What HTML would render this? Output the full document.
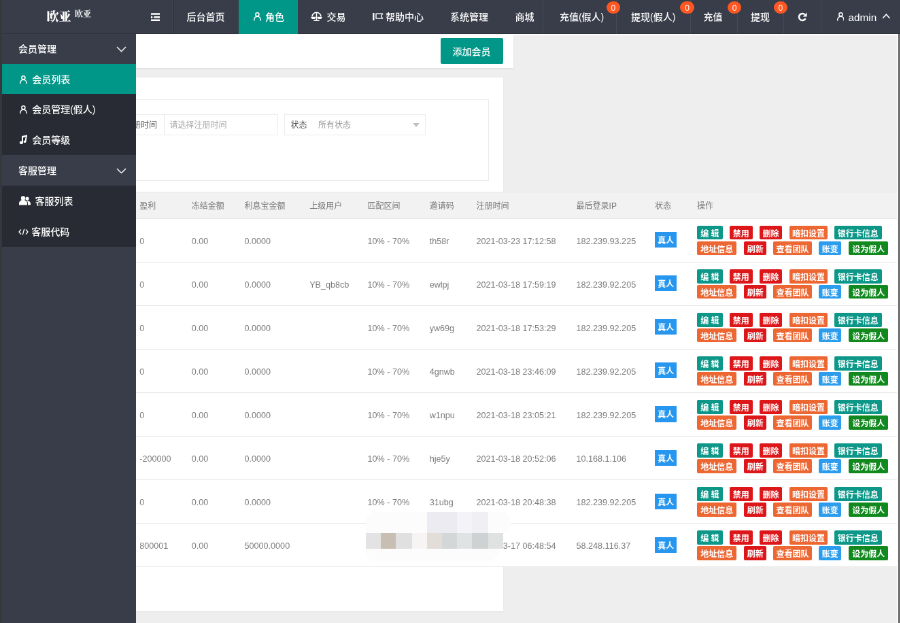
<!DOCTYPE html><html lang="zh-CN"><head><meta charset="utf-8"><title>会员列表</title><style>
*{box-sizing:border-box}
html,body{margin:0;padding:0}
body{width:900px;height:623px;overflow:hidden;background:#eeeeee;font-family:"Liberation Sans","Noto Sans CJK SC",sans-serif;}
#w{will-change:transform;position:absolute;left:0;top:0;width:1324px;height:918px;transform:scale(.68);transform-origin:0 0;overflow:hidden;background:#eeeeee;font-size:14px;color:#666}
#in{position:absolute;left:0;top:-1px;width:1324px;height:920px}
.abs{position:absolute}
#hd{position:absolute;left:0;top:0;width:1324px;height:51.3px;background:#393d49;z-index:30;border-bottom:1px solid #30333d}
.ni{font-weight:500;position:absolute;top:0;height:51.3px;line-height:52.2px;color:#fff;font-size:14px;white-space:nowrap}
.ni.r{border-left:1px solid rgba(255,255,255,.07)}
.bdg{position:absolute;top:3.3px;right:-6px;height:17.5px;width:20.5px;line-height:21px;overflow:hidden;padding:0;border-radius:9px;background:#ff5722;color:#fff;font-size:12px;text-align:center;z-index:2}
#sd{position:absolute;left:0;top:0;padding-top:0;width:200.2px;height:920px;background:#393d49;z-index:20}
.si{font-weight:500;position:absolute;left:0;width:200.2px;height:45px;line-height:47.4px;color:#fff;font-size:14px;white-space:nowrap}
.si.sub{background:#282b33}
.si.act{background:#009688;left:3px;width:197.2px}
.si .t{position:absolute;left:47.2px;top:0}
.si .g{position:absolute;left:27px;top:0}
.si svg{position:absolute}
#strip{position:absolute;left:0;top:0;width:2.8px;height:920px;background:#37383e;z-index:40}
#tb{position:absolute;left:0;top:50px;width:755px;height:50.5px;background:#fff;box-shadow:0 1px 2px rgba(0,0,0,.08)}
#add{font-weight:500;position:absolute;left:647.5px;top:57px;width:92px;height:38px;line-height:40.8px;background:#009688;color:#fff;border-radius:2px;text-align:center;font-size:14px}
#card{position:absolute;left:0;top:115px;width:739.5px;height:785px;background:#fff;box-shadow:0 1px 2px rgba(0,0,0,.06)}
#fs{position:absolute;left:0;top:147px;width:718.6px;height:119.8px;border:1px solid #ebebeb;border-left:none}
.fg{position:absolute;top:168.6px;height:31.5px;border:1px solid #ececec;background:#fff;font-size:12px;line-height:31px;color:#555;white-space:nowrap}
.ph{color:#aaa}
#th{position:absolute;left:0;top:282.5px;width:1324px;height:40.2px;background:#f2f2f2;border-top:1px solid #e6e6e6;border-bottom:1px solid #e6e6e6;font-size:12px;color:#777}
#th span{position:absolute;top:0;line-height:40.6px;white-space:nowrap}
.tr{position:absolute;left:0;width:1324px;height:64.06px;background:#fff;border-bottom:1px solid #e6e6e6;font-size:12.6px;color:#7a7a7a}
.tr span.c{position:absolute;top:0;line-height:67.6px;white-space:nowrap}
.b{font-weight:700;position:absolute;height:20.7px;line-height:24.4px;overflow:hidden;font-size:12px;color:#fff;border-radius:2px;text-align:center;white-space:nowrap;padding:0}
.teal{background:#0c9788}.red{background:#dd161a}.org{background:#ed6733}.blue{background:#2c9cec}.grn{background:#11891e}
#edge{position:absolute;left:1321.2px;top:50px;width:3px;height:870px;background:linear-gradient(90deg,#4c4c4c,#8c8c8c);z-index:25}
#edgew{position:absolute;left:1318.8px;top:50px;width:2.4px;height:870px;background:#fbfbfb;z-index:25}
#topl{position:absolute;left:200px;top:51.3px;width:1121px;height:1.8px;background:#fbfbfb;z-index:4}
</style></head><body><div id="w"><div id="in">
<div id="tb"></div><div id="add">添加会员</div>
<div id="card"></div><div id="fs"></div>
<div class="fg" style="left:120px;width:288.5px"><span class="abs" style="right:55px;top:0;display:none"></span><span class="abs" style="left:62px;top:0">注册时间</span><span class="abs" style="left:120px;top:0;width:1px;height:30px;background:#e6e6e6"></span><span class="abs ph" style="left:128.4px;top:0">请选择注册时间</span></div>
<div class="fg" style="left:418.2px;width:207.5px"><span class="abs" style="left:8.3px;top:0">状态</span><span class="abs ph" style="left:48.8px;top:0;color:#999">所有状态</span><span class="abs" style="left:187.5px;top:12.5px;width:0;height:0;border-left:5.5px solid transparent;border-right:5.5px solid transparent;border-top:6px solid #c2c2c2"></span></div>
<div id="th">
<span style="left:205.2px">盈利</span>
<span style="left:281.7px">冻结金额</span>
<span style="left:359.6px">利息宝金额</span>
<span style="left:455.2px">上级用户</span>
<span style="left:540.5px">匹配区间</span>
<span style="left:631.7px">邀请码</span>
<span style="left:700.6px">注册时间</span>
<span style="left:847.6px">最后登录IP</span>
<span style="left:963px">状态</span>
<span style="left:1025px">操作</span>
</div>
<div class="tr" style="top:322.7px">
<span class="c" style="left:205.2px">0</span>
<span class="c" style="left:281.7px">0.00</span>
<span class="c" style="left:359.6px">0.0000</span>
<span class="c" style="left:540.5px">10% - 70%</span>
<span class="c" style="left:631.7px">th58r</span>
<span class="c" style="left:700.6px">2021-03-23 17:12:58</span>
<span class="c" style="left:847.6px">182.239.93.225</span>
<span class="b blue" style="left:963.2px;top:19.5px;width:32.2px;height:23.1px;line-height:27.2px;border-radius:0;background:#2696ef">真人</span>
<span class="b teal" style="left:1025.0px;top:10.1px;width:37.8px">编 辑</span>
<span class="b red" style="left:1073.1px;top:10.1px;width:33.5px">禁用</span>
<span class="b red" style="left:1116.9px;top:10.1px;width:33.4px">删除</span>
<span class="b org" style="left:1160.6px;top:10.1px;width:56.6px">暗扣设置</span>
<span class="b teal" style="left:1226.8px;top:10.1px;width:70.0px">银行卡信息</span>
<span class="b org" style="left:1025.0px;top:32.9px;width:58.4px">地址信息</span>
<span class="b red" style="left:1094.3px;top:32.9px;width:32.9px">刷新</span>
<span class="b org" style="left:1137.2px;top:32.9px;width:56.6px">查看团队</span>
<span class="b blue" style="left:1204.4px;top:32.9px;width:32.6px">账变</span>
<span class="b grn" style="left:1248.1px;top:32.9px;width:58.2px">设为假人</span>
</div>
<div class="tr" style="top:386.76px">
<span class="c" style="left:205.2px">0</span>
<span class="c" style="left:281.7px">0.00</span>
<span class="c" style="left:359.6px">0.0000</span>
<span class="c" style="left:455.2px">YB_qb8cb</span>
<span class="c" style="left:540.5px">10% - 70%</span>
<span class="c" style="left:631.7px">ewlpj</span>
<span class="c" style="left:700.6px">2021-03-18 17:59:19</span>
<span class="c" style="left:847.6px">182.239.92.205</span>
<span class="b blue" style="left:963.2px;top:19.5px;width:32.2px;height:23.1px;line-height:27.2px;border-radius:0;background:#2696ef">真人</span>
<span class="b teal" style="left:1025.0px;top:10.1px;width:37.8px">编 辑</span>
<span class="b red" style="left:1073.1px;top:10.1px;width:33.5px">禁用</span>
<span class="b red" style="left:1116.9px;top:10.1px;width:33.4px">删除</span>
<span class="b org" style="left:1160.6px;top:10.1px;width:56.6px">暗扣设置</span>
<span class="b teal" style="left:1226.8px;top:10.1px;width:70.0px">银行卡信息</span>
<span class="b org" style="left:1025.0px;top:32.9px;width:58.4px">地址信息</span>
<span class="b red" style="left:1094.3px;top:32.9px;width:32.9px">刷新</span>
<span class="b org" style="left:1137.2px;top:32.9px;width:56.6px">查看团队</span>
<span class="b blue" style="left:1204.4px;top:32.9px;width:32.6px">账变</span>
<span class="b grn" style="left:1248.1px;top:32.9px;width:58.2px">设为假人</span>
</div>
<div class="tr" style="top:450.82px">
<span class="c" style="left:205.2px">0</span>
<span class="c" style="left:281.7px">0.00</span>
<span class="c" style="left:359.6px">0.0000</span>
<span class="c" style="left:540.5px">10% - 70%</span>
<span class="c" style="left:631.7px">yw69g</span>
<span class="c" style="left:700.6px">2021-03-18 17:53:29</span>
<span class="c" style="left:847.6px">182.239.92.205</span>
<span class="b blue" style="left:963.2px;top:19.5px;width:32.2px;height:23.1px;line-height:27.2px;border-radius:0;background:#2696ef">真人</span>
<span class="b teal" style="left:1025.0px;top:10.1px;width:37.8px">编 辑</span>
<span class="b red" style="left:1073.1px;top:10.1px;width:33.5px">禁用</span>
<span class="b red" style="left:1116.9px;top:10.1px;width:33.4px">删除</span>
<span class="b org" style="left:1160.6px;top:10.1px;width:56.6px">暗扣设置</span>
<span class="b teal" style="left:1226.8px;top:10.1px;width:70.0px">银行卡信息</span>
<span class="b org" style="left:1025.0px;top:32.9px;width:58.4px">地址信息</span>
<span class="b red" style="left:1094.3px;top:32.9px;width:32.9px">刷新</span>
<span class="b org" style="left:1137.2px;top:32.9px;width:56.6px">查看团队</span>
<span class="b blue" style="left:1204.4px;top:32.9px;width:32.6px">账变</span>
<span class="b grn" style="left:1248.1px;top:32.9px;width:58.2px">设为假人</span>
</div>
<div class="tr" style="top:514.88px">
<span class="c" style="left:205.2px">0</span>
<span class="c" style="left:281.7px">0.00</span>
<span class="c" style="left:359.6px">0.0000</span>
<span class="c" style="left:540.5px">10% - 70%</span>
<span class="c" style="left:631.7px">4gnwb</span>
<span class="c" style="left:700.6px">2021-03-18 23:46:09</span>
<span class="c" style="left:847.6px">182.239.92.205</span>
<span class="b blue" style="left:963.2px;top:19.5px;width:32.2px;height:23.1px;line-height:27.2px;border-radius:0;background:#2696ef">真人</span>
<span class="b teal" style="left:1025.0px;top:10.1px;width:37.8px">编 辑</span>
<span class="b red" style="left:1073.1px;top:10.1px;width:33.5px">禁用</span>
<span class="b red" style="left:1116.9px;top:10.1px;width:33.4px">删除</span>
<span class="b org" style="left:1160.6px;top:10.1px;width:56.6px">暗扣设置</span>
<span class="b teal" style="left:1226.8px;top:10.1px;width:70.0px">银行卡信息</span>
<span class="b org" style="left:1025.0px;top:32.9px;width:58.4px">地址信息</span>
<span class="b red" style="left:1094.3px;top:32.9px;width:32.9px">刷新</span>
<span class="b org" style="left:1137.2px;top:32.9px;width:56.6px">查看团队</span>
<span class="b blue" style="left:1204.4px;top:32.9px;width:32.6px">账变</span>
<span class="b grn" style="left:1248.1px;top:32.9px;width:58.2px">设为假人</span>
</div>
<div class="tr" style="top:578.94px">
<span class="c" style="left:205.2px">0</span>
<span class="c" style="left:281.7px">0.00</span>
<span class="c" style="left:359.6px">0.0000</span>
<span class="c" style="left:540.5px">10% - 70%</span>
<span class="c" style="left:631.7px">w1npu</span>
<span class="c" style="left:700.6px">2021-03-18 23:05:21</span>
<span class="c" style="left:847.6px">182.239.92.205</span>
<span class="b blue" style="left:963.2px;top:19.5px;width:32.2px;height:23.1px;line-height:27.2px;border-radius:0;background:#2696ef">真人</span>
<span class="b teal" style="left:1025.0px;top:10.1px;width:37.8px">编 辑</span>
<span class="b red" style="left:1073.1px;top:10.1px;width:33.5px">禁用</span>
<span class="b red" style="left:1116.9px;top:10.1px;width:33.4px">删除</span>
<span class="b org" style="left:1160.6px;top:10.1px;width:56.6px">暗扣设置</span>
<span class="b teal" style="left:1226.8px;top:10.1px;width:70.0px">银行卡信息</span>
<span class="b org" style="left:1025.0px;top:32.9px;width:58.4px">地址信息</span>
<span class="b red" style="left:1094.3px;top:32.9px;width:32.9px">刷新</span>
<span class="b org" style="left:1137.2px;top:32.9px;width:56.6px">查看团队</span>
<span class="b blue" style="left:1204.4px;top:32.9px;width:32.6px">账变</span>
<span class="b grn" style="left:1248.1px;top:32.9px;width:58.2px">设为假人</span>
</div>
<div class="tr" style="top:643.0px">
<span class="c" style="left:205.2px">-200000</span>
<span class="c" style="left:281.7px">0.00</span>
<span class="c" style="left:359.6px">0.0000</span>
<span class="c" style="left:540.5px">10% - 70%</span>
<span class="c" style="left:631.7px">hje5y</span>
<span class="c" style="left:700.6px">2021-03-18 20:52:06</span>
<span class="c" style="left:847.6px">10.168.1.106</span>
<span class="b blue" style="left:963.2px;top:19.5px;width:32.2px;height:23.1px;line-height:27.2px;border-radius:0;background:#2696ef">真人</span>
<span class="b teal" style="left:1025.0px;top:10.1px;width:37.8px">编 辑</span>
<span class="b red" style="left:1073.1px;top:10.1px;width:33.5px">禁用</span>
<span class="b red" style="left:1116.9px;top:10.1px;width:33.4px">删除</span>
<span class="b org" style="left:1160.6px;top:10.1px;width:56.6px">暗扣设置</span>
<span class="b teal" style="left:1226.8px;top:10.1px;width:70.0px">银行卡信息</span>
<span class="b org" style="left:1025.0px;top:32.9px;width:58.4px">地址信息</span>
<span class="b red" style="left:1094.3px;top:32.9px;width:32.9px">刷新</span>
<span class="b org" style="left:1137.2px;top:32.9px;width:56.6px">查看团队</span>
<span class="b blue" style="left:1204.4px;top:32.9px;width:32.6px">账变</span>
<span class="b grn" style="left:1248.1px;top:32.9px;width:58.2px">设为假人</span>
</div>
<div class="tr" style="top:707.06px">
<span class="c" style="left:205.2px">0</span>
<span class="c" style="left:281.7px">0.00</span>
<span class="c" style="left:359.6px">0.0000</span>
<span class="c" style="left:540.5px">10% - 70%</span>
<span class="c" style="left:631.7px">31ubg</span>
<span class="c" style="left:700.6px">2021-03-18 20:48:38</span>
<span class="c" style="left:847.6px">182.239.92.205</span>
<span class="b blue" style="left:963.2px;top:19.5px;width:32.2px;height:23.1px;line-height:27.2px;border-radius:0;background:#2696ef">真人</span>
<span class="b teal" style="left:1025.0px;top:10.1px;width:37.8px">编 辑</span>
<span class="b red" style="left:1073.1px;top:10.1px;width:33.5px">禁用</span>
<span class="b red" style="left:1116.9px;top:10.1px;width:33.4px">删除</span>
<span class="b org" style="left:1160.6px;top:10.1px;width:56.6px">暗扣设置</span>
<span class="b teal" style="left:1226.8px;top:10.1px;width:70.0px">银行卡信息</span>
<span class="b org" style="left:1025.0px;top:32.9px;width:58.4px">地址信息</span>
<span class="b red" style="left:1094.3px;top:32.9px;width:32.9px">刷新</span>
<span class="b org" style="left:1137.2px;top:32.9px;width:56.6px">查看团队</span>
<span class="b blue" style="left:1204.4px;top:32.9px;width:32.6px">账变</span>
<span class="b grn" style="left:1248.1px;top:32.9px;width:58.2px">设为假人</span>
</div>
<div class="tr" style="top:771.12px">
<span class="c" style="left:205.2px">800001</span>
<span class="c" style="left:281.7px">0.00</span>
<span class="c" style="left:359.6px">50000.0000</span>
<span class="c" style="left:700.6px">2021-03-17 06:48:54</span>
<span class="c" style="left:847.6px">58.248.116.37</span>
<span class="b blue" style="left:963.2px;top:19.5px;width:32.2px;height:23.1px;line-height:27.2px;border-radius:0;background:#2696ef">真人</span>
<span class="b teal" style="left:1025.0px;top:10.1px;width:37.8px">编 辑</span>
<span class="b red" style="left:1073.1px;top:10.1px;width:33.5px">禁用</span>
<span class="b red" style="left:1116.9px;top:10.1px;width:33.4px">删除</span>
<span class="b org" style="left:1160.6px;top:10.1px;width:56.6px">暗扣设置</span>
<span class="b teal" style="left:1226.8px;top:10.1px;width:70.0px">银行卡信息</span>
<span class="b org" style="left:1025.0px;top:32.9px;width:58.4px">地址信息</span>
<span class="b red" style="left:1094.3px;top:32.9px;width:32.9px">刷新</span>
<span class="b org" style="left:1137.2px;top:32.9px;width:56.6px">查看团队</span>
<span class="b blue" style="left:1204.4px;top:32.9px;width:32.6px">账变</span>
<span class="b grn" style="left:1248.1px;top:32.9px;width:58.2px">设为假人</span>
</div>
<div class="abs" style="left:538px;top:754px;width:195px;height:72px;background:#fdfcfc;border-radius:14px 0 16px 14px;z-index:5"></div>
<div class="abs" style="left:730px;top:754px;width:21px;height:30px;background:#fdfcfc;border-radius:0 14px 10px 0;z-index:5"></div>
<div class="abs" style="left:538.2px;top:784.8px;width:22.1px;height:22.9px;background:#e3e3e3;z-index:6"></div>
<div class="abs" style="left:560.3px;top:784.8px;width:22.1px;height:22.9px;background:#c9beb4;z-index:6"></div>
<div class="abs" style="left:582.4px;top:784.8px;width:23.5px;height:22.9px;background:#e0e0e0;z-index:6"></div>
<div class="abs" style="left:605.9px;top:784.8px;width:22.1px;height:22.9px;background:#f7f5f3;z-index:6"></div>
<div class="abs" style="left:627.9px;top:784.8px;width:22.1px;height:22.9px;background:#e3ddd8;z-index:6"></div>
<div class="abs" style="left:650.0px;top:784.8px;width:22.1px;height:22.9px;background:#d3d7d8;z-index:6"></div>
<div class="abs" style="left:672.1px;top:784.8px;width:22.1px;height:22.9px;background:#dfe3e4;z-index:6"></div>
<div class="abs" style="left:694.1px;top:784.8px;width:23.5px;height:22.9px;background:#ced2d2;z-index:6"></div>
<div class="abs" style="left:717.6px;top:784.8px;width:22.1px;height:22.9px;background:#e0e2e2;z-index:6"></div>
<div class="abs" style="left:627.9px;top:753.9px;width:44.1px;height:30.9px;background:#ecebf2;z-index:6"></div>
<div class="abs" style="left:672.1px;top:753.9px;width:22.1px;height:30.9px;background:#f4f4f8;z-index:6"></div>
<div class="abs" style="left:694.1px;top:753.9px;width:23.5px;height:30.9px;background:#f0f0f4;z-index:6"></div>
<div id="sd">
<div class="si" style="top:50.4px"><span class="g">会员管理</span><svg style="left:171px;top:18.5px" width="15" height="9" viewBox="0 0 15 9"><path d="M1 1 L7.5 7.5 L14 1" fill="none" stroke="#e8e8e8" stroke-width="1.6"/></svg></div>
<div class="si act" style="top:95.4px;height:44px"><svg style="left:26.2px;top:16.4px" width="10.8" height="12.4" viewBox="0 0 10.8 12.4"><circle cx="5.4" cy="3.3" r="2.55" fill="none" stroke="#fff" stroke-width="1.5"/><path d="M0.8 12.4 V10.6 A4.6 4.3 0 0 1 10 10.6 V12.4" fill="none" stroke="#fff" stroke-width="1.5"/></svg><span class="t" style="left:44.2px">会员列表</span></div>
<div class="si sub" style="top:139.4px"><svg style="left:29.2px;top:16.4px" width="10.8" height="12.4" viewBox="0 0 10.8 12.4"><circle cx="5.4" cy="3.3" r="2.55" fill="none" stroke="#fff" stroke-width="1.5"/><path d="M0.8 12.4 V10.6 A4.6 4.3 0 0 1 10 10.6 V12.4" fill="none" stroke="#fff" stroke-width="1.5"/></svg><span class="t" style="left:47.2px">会员管理(假人)</span></div>
<div class="si sub" style="top:184.4px"><svg style="left:27px;top:15px" width="14" height="15" viewBox="0 0 14 15"><path d="M5 2 L13 0.5 V3 L7 4.2 V11.5 A2.6 2.2 0 1 1 5 9.6 Z M10 5.5 L13 1 L11.5 10 A2 1.8 0 1 1 10 8.5Z" fill="#fff"/></svg><span class="t" style="left:47.2px">会员等级</span></div>
<div class="si" style="top:229.4px"><span class="g">客服管理</span><svg style="left:171px;top:18.5px" width="15" height="9" viewBox="0 0 15 9"><path d="M1 1 L7.5 7.5 L14 1" fill="none" stroke="#e8e8e8" stroke-width="1.6"/></svg></div>
<div class="si sub" style="top:274.4px"><svg style="left:27.5px;top:15px" width="17" height="14" viewBox="0 0 17 14"><circle cx="6" cy="3.5" r="3.2" fill="#fff"/><path d="M0 13.5 V11 A6 5 0 0 1 12 11 V13.5Z" fill="#fff"/><circle cx="12" cy="4" r="2.6" fill="#fff"/><path d="M13 13.5 V10.5 A6 5 0 0 0 11.5 7.5 A4.5 4.5 0 0 1 17 11 V13.5Z" fill="#fff"/></svg><span class="t" style="left:51.5px">客服列表</span></div>
<div class="si sub" style="top:319.4px"><svg style="left:27px;top:17.5px" width="15" height="10" viewBox="0 0 15 10"><path d="M4 1.5 L1 5 L4 8.5 M11 1.5 L14 5 L11 8.5 M8.7 0.8 L6.3 9.2" fill="none" stroke="#fff" stroke-width="1.3"/></svg><span class="t" style="left:46.2px">客服代码</span></div>
</div>
<div id="hd">
<div class="abs" style="left:68.5px;top:11.2px;color:#fff;font-family:'Liberation Serif','Noto Serif CJK SC',serif;font-weight:900;font-size:18px;line-height:30px;white-space:nowrap;letter-spacing:0">欧亚<span style="font-size:12px;position:relative;top:-6.2px;left:5.5px;letter-spacing:0;font-weight:700">欧亚</span></div>
<div class="ni" style="left:200px;width:56px;border-right:1px solid rgba(0,0,0,.13)"><span class="abs" style="left:52.5px;top:0;width:1px;height:50px;background:rgba(255,255,255,.04)"></span><svg class="abs" style="left:21.5px;top:19.6px" width="13.8" height="12.4" viewBox="0 0 15 13"><path d="M0 1.4 H15 M4.6 6.5 H15 M0 11.6 H15" stroke="#fff" stroke-width="2.8" fill="none"/><path d="M0 4 L3.2 6.5 L0 9Z" fill="#fff"/></svg></div>
<div class="ni" style="left:256px;width:96px;"><span class="abs" style="left:18.6px">后台首页</span></div>
<div class="ni" style="left:351px;width:86.6px;background:#009688"><svg class="abs" style="left:22px;top:19.4px" width="10.8" height="12.4" viewBox="0 0 10.8 12.4"><circle cx="5.4" cy="3.3" r="2.55" fill="none" stroke="#fff" stroke-width="1.5"/><path d="M0.8 12.4 V10.6 A4.6 4.3 0 0 1 10 10.6 V12.4" fill="none" stroke="#fff" stroke-width="1.5"/></svg><span class="abs" style="left:39px">角色</span></div>
<div class="ni" style="left:439px;width:89px;"><svg class="abs" style="left:18.3px;top:18.4px" width="17" height="14.5" viewBox="0 0 18 15"><path d="M2.2 7.5 A6.8 6.3 0 0 1 15.8 7.5" stroke="#fff" stroke-width="1.7" fill="none"/><path d="M9 1 V13.5 M4.5 13.8 H13.5" stroke="#fff" stroke-width="1.6" fill="none"/><path d="M0.3 8 H8 A3.85 3.6 0 0 1 0.3 8Z M10 8 H17.7 A3.85 3.6 0 0 1 10 8Z" fill="#fff"/></svg><span class="abs" style="left:41.5px">交易</span></div>
<div class="ni" style="left:528px;width:114px;"><svg class="abs" style="left:20px;top:19.8px" width="15.5" height="11.5" viewBox="0 0 15.5 11.5"><rect x="0.2" y="0" width="2.3" height="11.5" fill="#fff"/><path d="M5 1.3 H14.4 L12.7 4.7 L14.4 8.1 H5 Z" fill="none" stroke="#fff" stroke-width="1.4"/></svg><span class="abs" style="left:39px">帮助中心</span></div>
<div class="ni" style="left:642px;width:96px;"><span class="abs" style="left:20px">系统管理</span></div>
<div class="ni" style="left:738px;width:68px;"><span class="abs" style="left:19.5px">商城</span></div>
<div class="ni r" style="left:798.4px;width:107.8px"><span class="abs" style="left:23.5px">充值(假人)</span><span class="bdg">0</span></div>
<div class="ni r" style="left:906.2px;width:108.7px"><span class="abs" style="left:20.799999999999955px">提现(假人)</span><span class="bdg">0</span></div>
<div class="ni r" style="left:1014.9px;width:69.4px"><span class="abs" style="left:18.500000000000114px">充值</span><span class="bdg">0</span></div>
<div class="ni r" style="left:1084.3px;width:67.9px"><span class="abs" style="left:18.600000000000136px">提现</span><span class="bdg">0</span></div>
<div class="ni r" style="left:1152.2px;width:54.8px"><svg class="abs" style="left:20px;top:18.5px" width="14" height="14" viewBox="0 0 15 15"><path d="M12.4 9.8 A5.4 5.4 0 1 1 11.3 3.6" fill="none" stroke="#fff" stroke-width="2.7"/><path d="M14.6 0.6 V7 H8.2Z" fill="#fff"/></svg></div>
<div class="ni r" style="left:1207px;width:117px"><svg class="abs" style="left:22.5px;top:19.4px" width="10.8" height="12.4" viewBox="0 0 10.8 12.4"><circle cx="5.4" cy="3.3" r="2.55" fill="none" stroke="#fff" stroke-width="1.5"/><path d="M0.8 12.4 V10.6 A4.6 4.3 0 0 1 10 10.6 V12.4" fill="none" stroke="#fff" stroke-width="1.5"/></svg><span class="abs" style="left:39.6px;top:0.8px;font-size:15.3px">admin</span><svg class="abs" style="left:89.3px;top:21px" width="12.6" height="7.6" viewBox="0 0 14 9"><path d="M1 8 L7 1.5 L13 8" fill="none" stroke="#fff" stroke-width="2"/></svg></div>
</div>
<div id="strip"></div><div id="topl"></div><div id="edgew"></div><div id="edge"></div>
</div></div></body></html>
